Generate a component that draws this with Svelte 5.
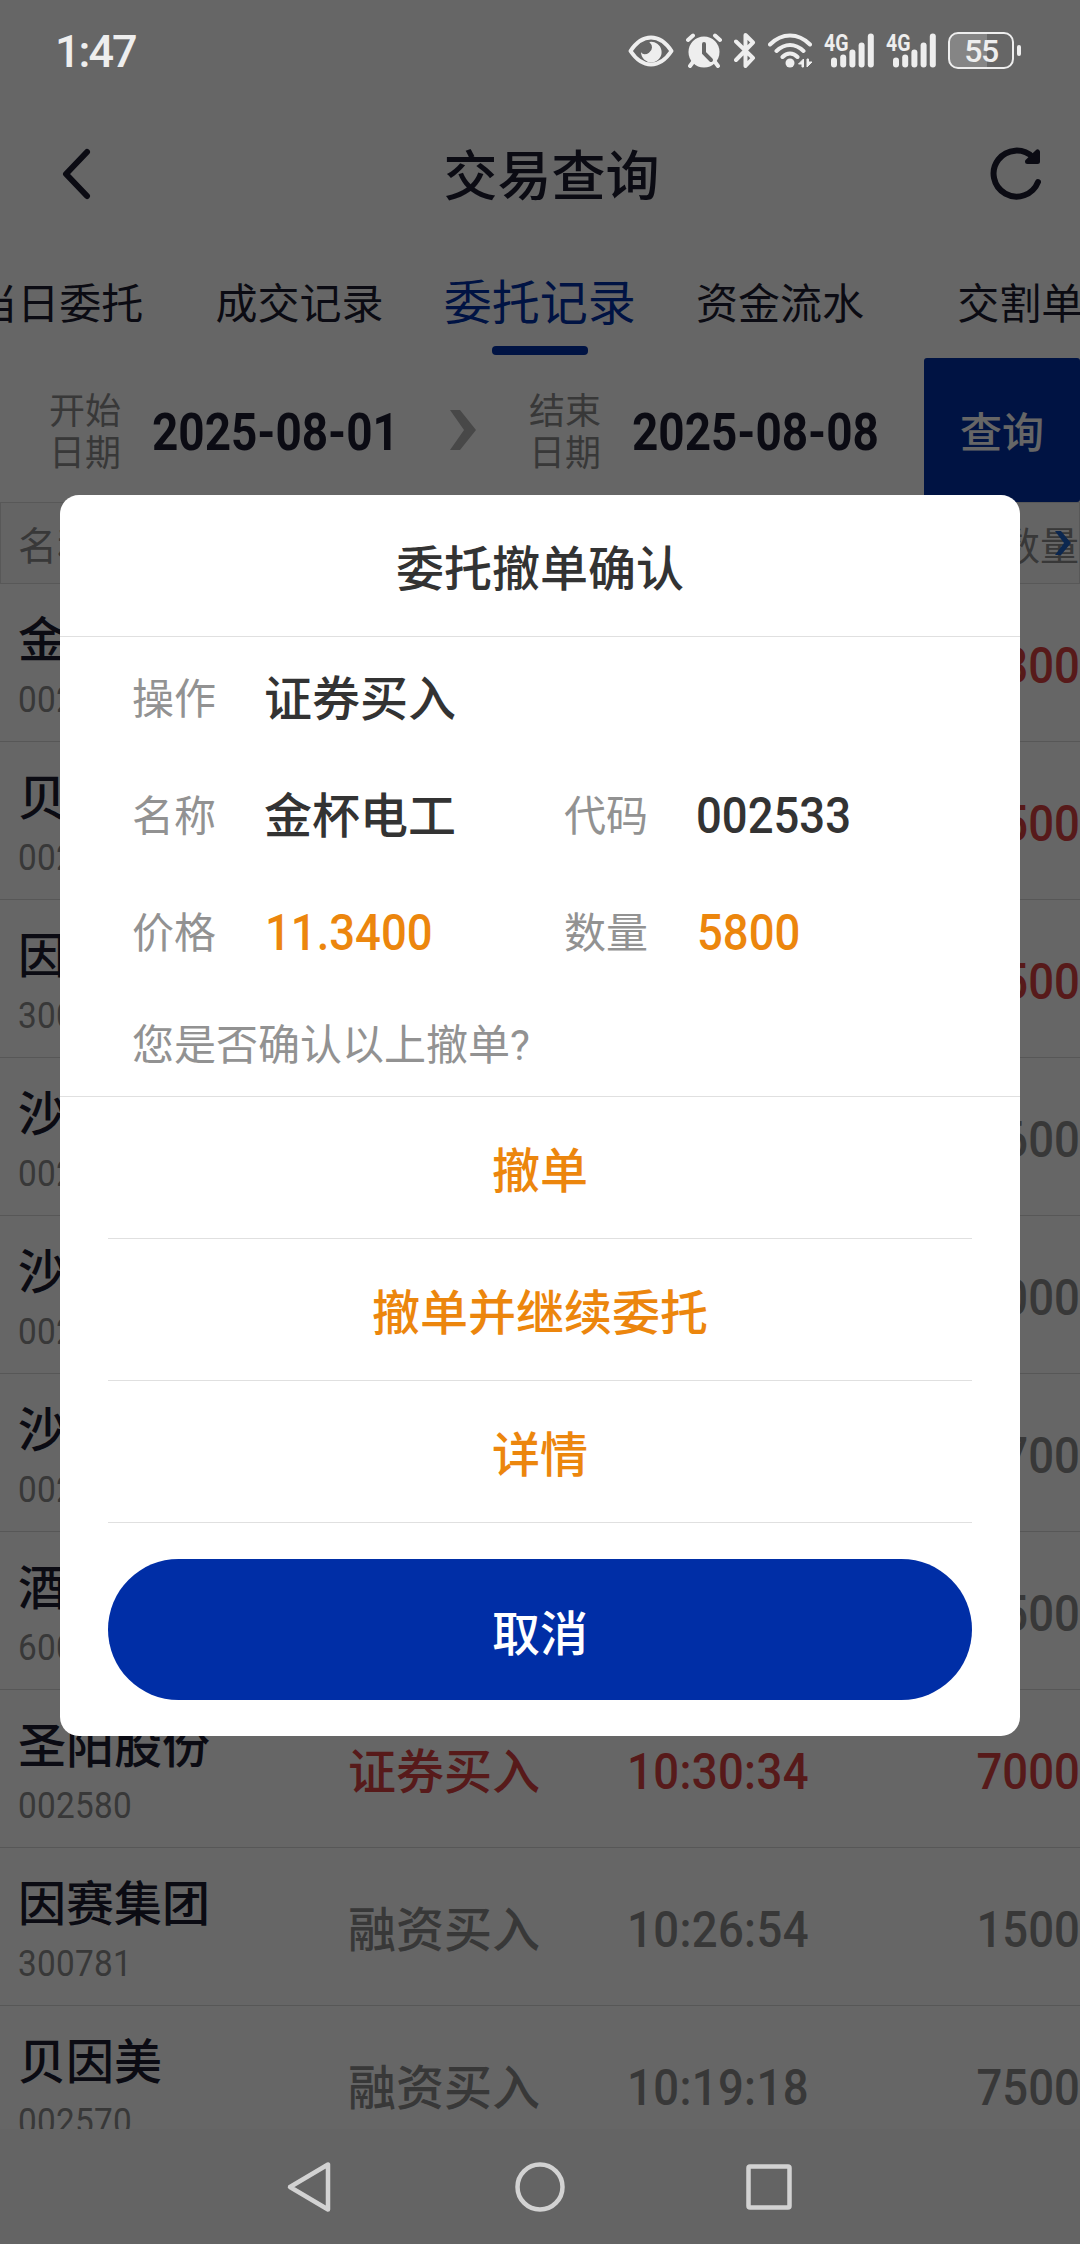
<script lang="ts">
  type Order = {
    name: string
    code: string
    action: string
    time: string
    amount: string
    filled?: boolean
  }

  const tabs = ['当日委托', '成交记录', '委托记录', '资金流水', '交割单']
  const activeTab = '委托记录'

  const orders: Order[] = [
    { name: '金杯电工', code: '002533', action: '证券买入', time: '10:52:41', amount: '5800', filled: true },
    { name: '贝因美', code: '002570', action: '证券买入', time: '10:48:20', amount: '7500', filled: true },
    { name: '因赛集团', code: '300781', action: '证券买入', time: '10:45:12', amount: '1500', filled: true },
    { name: '沙钢股份', code: '002075', action: '融资买入', time: '10:41:36', amount: '7600', filled: false },
    { name: '沙钢股份', code: '002075', action: '融资买入', time: '10:38:05', amount: '9000', filled: false },
    { name: '沙钢股份', code: '002075', action: '融资买入', time: '10:35:47', amount: '7700', filled: false },
    { name: '酒钢宏兴', code: '600307', action: '融资买入', time: '10:32:58', amount: '9500', filled: false },
    { name: '圣阳股份', code: '002580', action: '证券买入', time: '10:30:34', amount: '7000', filled: true },
    { name: '因赛集团', code: '300781', action: '融资买入', time: '10:26:54', amount: '1500', filled: false },
    { name: '贝因美', code: '002570', action: '融资买入', time: '10:19:18', amount: '7500', filled: false }
  ]

  const actions = ['撤单', '撤单并继续委托', '详情']
  const signalBars = [10, 13, 18, 25, 34]
</script>

<div class="screen">
  <div class="page">
    <header class="title-bar">
      <svg class="back" viewBox="0 0 30 52" width="30" height="52">
        <path d="M25 4 4 26l21 22" fill="none" stroke="currentColor" stroke-width="6" stroke-linecap="round" stroke-linejoin="round" />
      </svg>
      <h1>交易查询</h1>
      <svg class="refresh" viewBox="0 0 52 54" width="52" height="54">
        <path d="M48 35A23 23 0 1 1 43 10.500" fill="none" stroke="currentColor" stroke-width="6" stroke-linecap="round" />
        <path d="M47.500 5v9.500H37.500z" fill="currentColor" stroke="currentColor" stroke-width="5" stroke-linejoin="round" />
      </svg>
    </header>

    <nav class="tabs">
      {#each tabs as tab}
        <div class="tab" class:active={tab === activeTab}><span>{tab}</span></div>
      {/each}
    </nav>

    <section class="filters">
      <div class="date-label">开始<br />日期</div>
      <div class="date"><span class="num">2025-08-01</span></div>
      <svg class="arrow" viewBox="0 0 28 42" width="28" height="42">
        <path d="M1 1h10l16 20-16 20H1l14-20z" fill="currentColor" />
      </svg>
      <div class="date-label">结束<br />日期</div>
      <div class="date"><span class="num">2025-08-08</span></div>
      <button class="query">查询</button>
    </section>

    <section class="table">
      <div class="table-head">
        <span>名称</span>
        <span>数量</span>
        <svg class="more" viewBox="0 0 16 24" width="16" height="24">
          <path d="M0 0h6l10 12L6 24H0l9-12z" fill="currentColor" />
        </svg>
      </div>
      {#each orders as order}
        <div class="order" class:filled={order.filled}>
          <div class="stock">
            <strong>{order.name}</strong>
            <small><span class="num">{order.code}</span></small>
          </div>
          <div class="kind">{order.action}</div>
          <div class="time"><span class="num">{order.time}</span></div>
          <div class="amount"><span class="num">{order.amount}</span></div>
        </div>
      {/each}
    </section>

    <div class="nav-space"></div>
  </div>

  <div class="overlay">
    <div class="status-bar">
      <span class="clock">1:47</span>
      <div class="status-icons">
        <svg class="eye" viewBox="0 0 46 32" width="46" height="32">
          <path d="M2.500 16Q11.500 2.500 23 2.500T43.500 16Q34.500 29.500 23 29.500T2.500 16z" fill="none" stroke="currentColor" stroke-width="4" stroke-linejoin="round" />
          <path d="M21.300 7A10.300 10.300 0 1 1 13 17.300Q14.500 19.300 16.500 19.300 19 19.300 21 17.800 24 15.500 24 12.500 24 9.500 21.300 7z" fill="currentColor" />
        </svg>
        <svg class="alarm" viewBox="0 0 36 35" width="36" height="35">
          <circle cx="18" cy="19" r="15.500" fill="currentColor" />
          <path d="m2 7 5-4.500M34 7l-5-4.500M7 29l-3 4M29 29l3 4" stroke="currentColor" stroke-width="4" stroke-linecap="round" />
          <path d="M18 11v9l7 7" fill="none" stroke="#666" stroke-width="4" stroke-linecap="round" />
        </svg>
        <svg class="bluetooth" viewBox="0 0 22 35" width="22" height="35">
          <path d="m2 8.500 17 16.500-7.500 8V2l7.500 7.500L2 27" fill="none" stroke="currentColor" stroke-width="4" stroke-linecap="round" stroke-linejoin="round" />
        </svg>
        <svg class="wifi" viewBox="0 0 44 35" width="44" height="35">
          <path d="M2 11.500Q11 2.500 22 2.500t20 9M8.500 18Q15 12 22 12t13.500 6M14.500 24Q18 20.500 22 20.500t7.500 3.500" fill="none" stroke="currentColor" stroke-width="4" stroke-linecap="round" />
          <circle cx="22" cy="30" r="4.500" fill="currentColor" />
          <path d="M35.500 26v8H34v-3h-3.500zM39 34v-8h1.500v3h3.500z" fill="currentColor" stroke="currentColor" stroke-width="1" />
        </svg>
        {#each [1, 2] as sim}
          <svg class="signal" viewBox="0 0 51 35" width="51" height="35">
            <text x="1" y="17.500" textLength="24.5" lengthAdjust="spacingAndGlyphs">4G</text>
            {#each signalBars as height, i}
              <rect x={8 + i * 9.200} y={34.500 - height} width="6" {height} rx="3" fill="currentColor" />
            {/each}
          </svg>
        {/each}
        <div class="battery"><span>55</span></div>
        <i class="battery-tip"></i>
      </div>
    </div>

    <div class="dialog" role="dialog" aria-label="委托撤单确认">
      <h2>委托撤单确认</h2>
      <div class="details">
        <div class="pair wide">
          <span class="label">操作</span>
          <span class="value">证券买入</span>
        </div>
        <div class="pair">
          <span class="label">名称</span>
          <span class="value">金杯电工</span>
        </div>
        <div class="pair">
          <span class="label">代码</span>
          <span class="value digits"><span class="num">002533</span></span>
        </div>
        <div class="pair">
          <span class="label">价格</span>
          <span class="value digits accent"><span class="num">11.3400</span></span>
        </div>
        <div class="pair">
          <span class="label">数量</span>
          <span class="value digits accent"><span class="num">5800</span></span>
        </div>
        <p>您是否确认以上撤单?</p>
      </div>
      <div class="actions">
        {#each actions as action}
          <button class="action">{action}</button>
        {/each}
        <button class="cancel">取消</button>
      </div>
    </div>

    <div class="system-nav">
      <svg viewBox="0 0 50 54" width="50" height="54">
        <path d="M42 4.500v45L4 27z" fill="none" stroke="currentColor" stroke-width="4.500" stroke-linejoin="round" />
      </svg>
      <svg viewBox="0 0 50 54" width="50" height="54">
        <circle cx="25" cy="27" r="22.500" fill="none" stroke="currentColor" stroke-width="4.500" />
      </svg>
      <svg viewBox="0 0 50 54" width="50" height="54">
        <rect x="4.500" y="6.500" width="41" height="41" rx="1.500" fill="none" stroke="currentColor" stroke-width="4.500" />
      </svg>
    </div>
  </div>
</div>

<style>
  :global(body) {
    background: #666;
  }

  .screen {
    position: relative;
    width: 1080px;
    height: 2244px;
    overflow: hidden;
    font-family: Roboto, "Noto Sans CJK SC", sans-serif;
    color: #1c1d31;
  }

  h1,
  h2,
  p {
    margin: 0;
    font-weight: 500;
  }

  button {
    border: 0;
    padding: 0;
    font: inherit;
    background: none;
  }

  svg {
    display: block;
    flex: none;
  }

  /* numbers are set narrower than the default digits */
  .num {
    display: inline-block;
    transform: scaleX(0.9);
    transform-origin: left center;
  }

  .page {
    display: flex;
    flex-direction: column;
    height: 100%;
    background: #fff;
  }

  .title-bar {
    flex: none;
    display: flex;
    align-items: center;
    justify-content: space-between;
    box-sizing: border-box;
    height: 252px;
    padding: 95px 38px 0 62px;
  }

  h1 {
    padding: 9px 0 0 21px;
    font-size: 54px;
    line-height: 60px;
  }

  .tabs {
    flex: none;
    display: flex;
    height: 106px;
    margin-left: -61px;
  }

  .tab {
    flex: none;
    display: flex;
    flex-direction: column;
    align-items: center;
    width: 240.3px;
    padding-top: 22px;
    box-sizing: border-box;
    font-size: 42px;
    line-height: 62px;
    white-space: nowrap;
  }

  .tab.active {
    padding-top: 21px;
    font-size: 48px;
    color: #0030a8;
  }

  .tab.active::after {
    content: "";
    width: 96px;
    height: 9px;
    margin-top: 11px;
    border-radius: 4px;
    background: #0030a8;
  }

  .filters {
    flex: none;
    display: flex;
    align-items: center;
    height: 144px;
    padding-left: 49px;
  }

  .date-label {
    width: 72px;
    padding-top: 6px;
    color: #8c8c8c;
    font-size: 36px;
    line-height: 42px;
  }

  .date {
    width: 245px;
    margin-left: 31px;
    padding-top: 5px;
    font-size: 51px;
    font-weight: 700;
    line-height: 60px;
    white-space: nowrap;
  }

  .arrow {
    margin: 0 54px 0 52px;
    color: #b4b4b4;
  }

  .filters .arrow + .date-label {
    margin-left: -2px;
  }

  .query {
    width: 156px;
    height: 144px;
    margin-left: auto;
    padding-bottom: 2px;
    border-radius: 3px;
    background: #0030a8;
    color: #fff;
    font-size: 42px;
    font-weight: 500;
  }

  .table {
    flex: 1;
    min-height: 0;
    overflow: hidden;
  }

  .table-head {
    position: relative;
    display: flex;
    justify-content: space-between;
    align-items: center;
    box-sizing: border-box;
    height: 82px;
    padding: 0 0 0 17px;
    border: 1px solid #dcdcdc;
    background: #fbfbfb;
    color: #8c8c8c;
    font-size: 39px;
  }

  .more {
    position: absolute;
    top: 28px;
    right: 8px;
    color: #1c62c8;
  }

  .order {
    display: grid;
    grid-template-columns: 330px 279px 1fr 120px;
    align-items: center;
    box-sizing: border-box;
    height: 158px;
    padding-left: 18px;
    border-bottom: 1px solid #dadada;
    color: #8c8c8c;
    font-size: 48px;
    font-weight: 500;
  }

  .order.filled {
    color: #d94141;
  }

  .stock {
    display: flex;
    flex-direction: column;
    padding-top: 10px;
  }

  .stock strong {
    color: #1c1d31;
    font-weight: 500;
    line-height: 64px;
  }

  .stock small {
    color: #8c8c8c;
    font-size: 37px;
    font-weight: 400;
    line-height: 54px;
  }

  .stock .num {
    letter-spacing: 0.3px;
  }

  .kind {
    margin-top: -2px;
  }

  .time,
  .amount {
    padding-top: 6px;
    font-size: 50.5px;
    line-height: 60px;
  }

  .time {
    letter-spacing: 0.4px;
  }

  .amount {
    text-align: right;
  }

  .amount .num {
    transform-origin: right center;
  }

  .nav-space {
    flex: none;
    height: 115px;
    background: #fbfbfb;
  }

  .overlay {
    position: absolute;
    inset: 0;
    display: flex;
    flex-direction: column;
    align-items: center;
    background: rgba(0, 0, 0, 0.6);
  }

  .status-bar {
    display: flex;
    justify-content: space-between;
    align-self: stretch;
    box-sizing: border-box;
    height: 495px;
    padding: 32px 59px 0 55px;
    color: #eee;
  }

  .clock {
    height: 38px;
    font-size: 45px;
    font-weight: 500;
    line-height: 40px;
    letter-spacing: -2px;
  }

  .status-icons {
    display: flex;
    align-items: center;
    height: 37px;
  }

  .alarm {
    margin-left: 12px;
  }

  .bluetooth {
    margin-left: 12px;
  }

  .wifi {
    margin-left: 12px;
  }

  .signal {
    margin-left: 11px;
  }

  .signal text {
    fill: currentColor;
    font-size: 24px;
    font-weight: 700;
  }

  .battery {
    display: flex;
    align-items: center;
    justify-content: center;
    box-sizing: border-box;
    width: 66px;
    height: 37px;
    margin-left: 12px;
    border: 2.5px solid #eee;
    border-radius: 10px;
    background: linear-gradient(90deg, #858585 60%, transparent 60%);
    font-size: 32px;
    font-weight: 500;
    letter-spacing: -1.5px;
  }

  .battery-tip {
    width: 4px;
    height: 11px;
    margin-left: 3px;
    border-radius: 2px;
    background: #eee;
  }

  .dialog {
    flex: none;
    width: 960px;
    height: 1241px;
    overflow: hidden;
    border-radius: 19px;
    background: #fff;
    color: #333;
    font-size: 48px;
    font-weight: 500;
  }

  h2 {
    box-sizing: border-box;
    height: 142px;
    padding-top: 4px;
    border-bottom: 1px solid #e0e0e0;
    font-size: 48px;
    line-height: 142px;
    text-align: center;
  }

  .details {
    display: grid;
    grid-template-columns: 432px 1fr;
    grid-auto-rows: 117px;
    box-sizing: border-box;
    height: 460px;
    padding: 0 72px;
    border-bottom: 1px solid #e0e0e0;
  }

  .pair {
    display: flex;
    align-items: center;
    white-space: nowrap;
  }

  .label {
    width: 132px;
    color: #929292;
    font-size: 42px;
    font-weight: 400;
  }

  .wide {
    grid-column: 1 / -1;
  }

  .value {
    height: 72px;
    line-height: 80px;
  }

  .value.digits {
    line-height: 72px;
  }

  .value .num {
    padding-top: 3px;
    font-size: 50.5px;
  }

  .accent {
    color: #ec860d;
  }

  .accent .num {
    margin-left: 1px;
  }

  .details p {
    grid-column: 1 / -1;
    color: #929292;
    font-size: 42px;
    font-weight: 400;
    line-height: 115px;
  }

  .actions {
    padding: 0 48px;
  }

  .action {
    display: block;
    box-sizing: border-box;
    width: 100%;
    height: 142px;
    padding-bottom: 1px;
    border-bottom: 1px solid #e0e0e0;
    color: #ec860d;
  }

  .cancel {
    width: 100%;
    height: 141px;
    margin-top: 36px;
    border-radius: 71px;
    background: #002ea6;
    color: #fff;
  }

  .system-nav {
    display: flex;
    align-items: center;
    justify-content: center;
    gap: 179px;
    height: 115px;
    margin-top: auto;
    color: #d2d2d2;
  }
</style>
